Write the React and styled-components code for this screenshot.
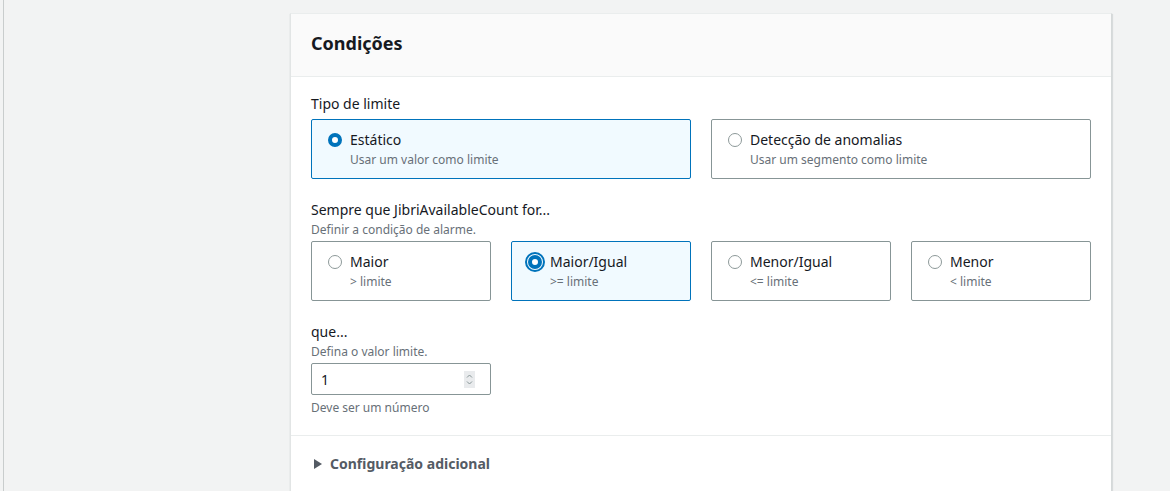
import styled, { createGlobalStyle } from "styled-components";

const GlobalStyle = createGlobalStyle`
	body {
		margin: 0;
		background: #f2f3f3;
		font-family: "Noto Sans", "Open Sans", sans-serif;
		color: #16191f;
	}
`;

const thresholdTypes = [
	{ id: "static", label: "Estático", description: "Usar um valor como limite", checked: true },
	{ id: "anomaly", label: "Detecção de anomalias", description: "Usar um segmento como limite" },
];

const operators = [
	{ id: "gt", label: "Maior", description: "> limite" },
	{ id: "gte", label: "Maior/Igual", description: ">= limite", checked: true, focused: true },
	{ id: "lte", label: "Menor/Igual", description: "<= limite" },
	{ id: "lt", label: "Menor", description: "< limite" },
];

const RadioIcon = ({ checked, focused }) => (
	<RadioSvg width="14" height="14" viewBox="0 0 14 14">
		{checked ? (
			<circle cx="7" cy="7" r="5" fill="#fff" stroke="#0073bb" strokeWidth="4" />
		) : (
			<circle cx="7" cy="7" r="6.5" fill="#fff" stroke="#8d9999" strokeWidth="1" />
		)}
		{focused && <circle cx="7" cy="7" r="9" fill="none" stroke="#0073bb" strokeWidth="2" />}
	</RadioSvg>
);

const Tile = ({ option }) => (
	<TileBox checked={option.checked}>
		<TileHead>
			<RadioIcon checked={option.checked} focused={option.focused} />
			<TileLabel>{option.label}</TileLabel>
		</TileHead>
		<TileDescription>{option.description}</TileDescription>
	</TileBox>
);

const App = () => {
	return (
		<>
			<GlobalStyle />
			<Page>
				<Main>
					<Card>
						<CardHeader>
							<Title>Condições</Title>
						</CardHeader>
						<CardBody>
							<Field>
								<Label>Tipo de limite</Label>
								<TileGrid columns={2}>
									{thresholdTypes.map((t) => (
										<Tile key={t.id} option={t} />
									))}
								</TileGrid>
							</Field>
							<Field>
								<Label>Sempre que JibriAvailableCount for...</Label>
								<Hint>Definir a condição de alarme.</Hint>
								<TileGrid columns={4}>
									{operators.map((o) => (
										<Tile key={o.id} option={o} />
									))}
								</TileGrid>
							</Field>
							<Field>
								<Label>que...</Label>
								<Hint>Defina o valor limite.</Hint>
								<InputBox>
									<InputValue>1</InputValue>
									<Spinner>
										<svg width="11" height="17" viewBox="0 0 11 17">
											<path d="M3 6.5 L5.5 4 L8 6.5" fill="none" stroke="#879596" strokeWidth="1" />
											<path d="M3 10.5 L5.5 13 L8 10.5" fill="none" stroke="#879596" strokeWidth="1" />
										</svg>
									</Spinner>
								</InputBox>
								<Constraint>Deve ser um número</Constraint>
							</Field>
						</CardBody>
						<Expander>
							<Caret viewBox="0 0 8 10" width="8" height="10">
								<path d="M0 0 L8 5 L0 10 Z" fill="#545b64" />
							</Caret>
							<ExpanderLabel>Configuração adicional</ExpanderLabel>
						</Expander>
					</Card>
				</Main>
			</Page>
		</>
	);
};

const Page = styled.div`
	display: flex;
	min-height: 491px;
	padding-left: 3px;
	overflow: hidden;
`;

const Main = styled.main`
	flex: 1;
	border-left: 1px solid #c9cdcd;
	padding: 13px 0 0 286px;
`;

const Card = styled.section`
	width: 820px;
	min-height: 500px;
	background: #fff;
	border-left: 1px solid #e2e5e5;
	border-right: 1px solid #d5d9d9;
	border-top: 1px solid #eaeded;
	box-shadow: 0 1px 1px 0 rgba(0, 28, 36, 0.2), 1px 1px 1px 0 rgba(0, 28, 36, 0.08);
`;

const CardHeader = styled.header`
	background: #fafafa;
	border-bottom: 1px solid #eaeded;
	padding: 18px 20px 21px;
`;

const Title = styled.h2`
	margin: 0;
	font-size: 18px;
	line-height: 23px;
	font-weight: 700;
	color: #16191f;
`;

const CardBody = styled.div`
	padding: 17px 20px 19px;
	border-bottom: 1px solid #eaeded;
	display: flex;
	flex-direction: column;
	gap: 21px;
`;

const Field = styled.div`
	display: flex;
	flex-direction: column;
`;

const Label = styled.div`
	font-size: 14px;
	line-height: 20px;
	color: #16191f;
	margin-bottom: 2px;
`;

const Hint = styled.div`
	font-size: 12px;
	line-height: 16px;
	color: #687078;
	margin-bottom: 3px;
`;

const TileGrid = styled.div`
	display: grid;
	grid-template-columns: repeat(${(p) => p.columns}, 1fr);
	gap: 20px;

	${Label} + & {
		margin-top: 3px;
	}
`;

const TileBox = styled.div`
	height: 60px;
	box-sizing: border-box;
	padding: 10px 16px 12px;
	border: 1px solid ${(p) => (p.checked ? "#0073bb" : "#879596")};
	background: ${(p) => (p.checked ? "#f1faff" : "#fff")};
	border-radius: 2px;
`;

const TileHead = styled.div`
	display: flex;
	align-items: center;
	gap: 8px;
	height: 20px;
`;

const RadioSvg = styled.svg`
	flex: none;
	overflow: visible;
`;

const TileLabel = styled.span`
	font-size: 14px;
	line-height: 20px;
	color: #16191f;
`;

const TileDescription = styled.div`
	font-size: 12px;
	line-height: 16px;
	color: #687078;
	padding-left: 22px;
	margin-top: 2px;
`;

const InputBox = styled.div`
	width: 180px;
	height: 32px;
	box-sizing: border-box;
	border: 1px solid #879596;
	border-radius: 2px;
	display: flex;
	align-items: center;
	justify-content: space-between;
	padding: 0 15px 0 9px;
`;

const InputValue = styled.span`
	font-size: 14px;
	color: #16191f;
`;

const Spinner = styled.span`
	display: flex;
	background: #e9ebed;
	width: 11px;
	height: 17px;
`;

const Constraint = styled.div`
	font-size: 12px;
	line-height: 16px;
	color: #687078;
	margin-top: 5px;
`;

const Expander = styled.div`
	display: flex;
	align-items: center;
	gap: 8px;
	padding: 18px 20px 0 23px;
	height: 20px;
`;

const Caret = styled.svg`
	flex: none;
`;

const ExpanderLabel = styled.span`
	font-size: 14px;
	line-height: 20px;
	font-weight: 700;
	color: #545b64;
`;

export default App;
